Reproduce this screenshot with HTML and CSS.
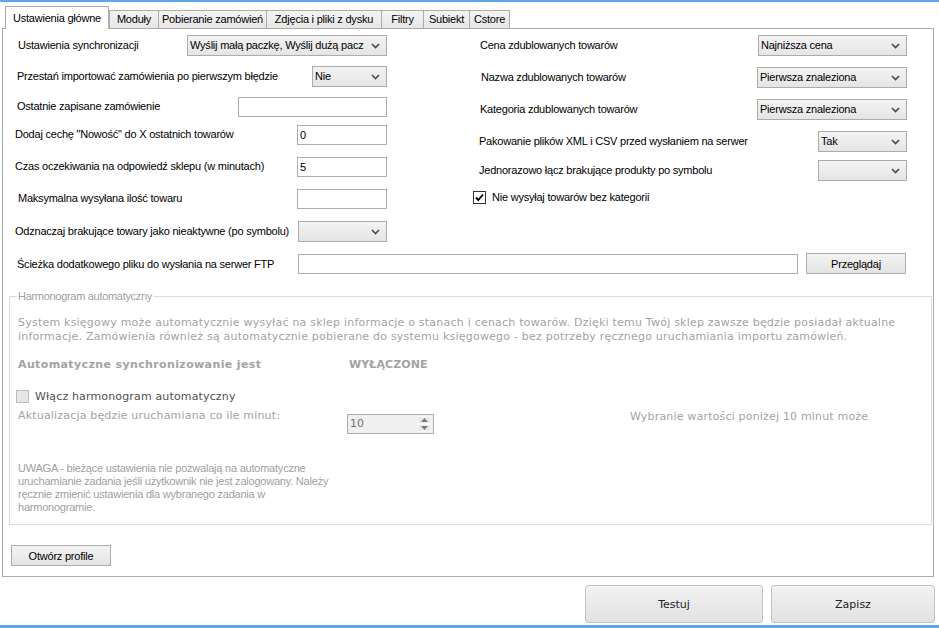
FILE: index.html
```html
<!DOCTYPE html>
<html lang="pl">
<head>
<meta charset="utf-8">
<title>Ustawienia główne</title>
<link rel="stylesheet" href="styles.css">
</head>
<body>
<div class="app">
  <div class="bar-top"></div>
  <div class="tabs">
    <div class="tab tab-active t1">Ustawienia główne</div>
    <div class="tab t2">Moduły</div>
    <div class="tab t3">Pobieranie zamówień</div>
    <div class="tab t4">Zdjęcia i pliki z dysku</div>
    <div class="tab t5">Filtry</div>
    <div class="tab t6">Subiekt</div>
    <div class="tab t7">Cstore</div>
  </div>
  <div class="page">
    <div class="columns">
      <div class="col col-left">
        <div class="row l1">
          <span class="lbl i3">Ustawienia synchronizacji</span>
          <div class="select w200"><span class="sel-text">Wyślij małą paczkę, Wyślij dużą pacz</span><svg class="chev" width="9" height="6" viewBox="0 0 9 6"><polyline points="1,1 4.5,4.5 8,1"/></svg></div>
        </div>
        <div class="row l2">
          <span class="lbl i2">Przestań importować zamówienia po pierwszym błędzie</span>
          <div class="select w75"><span class="sel-text">Nie</span><svg class="chev" width="9" height="6" viewBox="0 0 9 6"><polyline points="1,1 4.5,4.5 8,1"/></svg></div>
        </div>
        <div class="row l3">
          <span class="lbl i2">Ostatnie zapisane zamówienie</span>
          <div class="input w149"></div>
        </div>
        <div class="row l4">
          <span class="lbl">Dodaj cechę "Nowość" do X ostatnich towarów</span>
          <div class="input w90">0</div>
        </div>
        <div class="row l5">
          <span class="lbl">Czas oczekiwania na odpowiedź sklepu (w minutach)</span>
          <div class="input w90">5</div>
        </div>
        <div class="row l6">
          <span class="lbl i3">Maksymalna wysyłana ilość towaru</span>
          <div class="input w90"></div>
        </div>
        <div class="row l7">
          <span class="lbl">Odznaczaj brakujące towary jako nieaktywne (po symbolu)</span>
          <div class="select w89"><span class="sel-text"></span><svg class="chev" width="9" height="6" viewBox="0 0 9 6"><polyline points="1,1 4.5,4.5 8,1"/></svg></div>
        </div>
      </div>
      <div class="col col-right">
        <div class="row r1">
          <span class="lbl i7">Cena zdublowanych towarów</span>
          <div class="select w149"><span class="sel-text">Najniższa cena</span><svg class="chev" width="9" height="6" viewBox="0 0 9 6"><polyline points="1,1 4.5,4.5 8,1"/></svg></div>
        </div>
        <div class="row r2">
          <span class="lbl i8">Nazwa zdublowanych towarów</span>
          <div class="select w150"><span class="sel-text">Pierwsza znaleziona</span><svg class="chev" width="9" height="6" viewBox="0 0 9 6"><polyline points="1,1 4.5,4.5 8,1"/></svg></div>
        </div>
        <div class="row r3">
          <span class="lbl i7">Kategoria zdublowanych towarów</span>
          <div class="select w150"><span class="sel-text">Pierwsza znaleziona</span><svg class="chev" width="9" height="6" viewBox="0 0 9 6"><polyline points="1,1 4.5,4.5 8,1"/></svg></div>
        </div>
        <div class="row r4">
          <span class="lbl i6">Pakowanie plików XML i CSV przed wysłaniem na serwer</span>
          <div class="select w89"><span class="sel-text">Tak</span><svg class="chev" width="9" height="6" viewBox="0 0 9 6"><polyline points="1,1 4.5,4.5 8,1"/></svg></div>
        </div>
        <div class="row r5">
          <span class="lbl i6">Jednorazowo łącz brakujące produkty po symbolu</span>
          <div class="select w89"><span class="sel-text"></span><svg class="chev" width="9" height="6" viewBox="0 0 9 6"><polyline points="1,1 4.5,4.5 8,1"/></svg></div>
        </div>
        <div class="check-row">
          <span class="checkbox checked"><svg width="11" height="11" viewBox="0 0 11 11"><polyline points="2,5.5 4.3,8 9,2.5"/></svg></span>
          <span class="check-label">Nie wysyłaj towarów bez kategorii</span>
        </div>
      </div>
    </div>

    <div class="path-row">
      <span class="path-lbl">Ścieżka dodatkowego pliku do wysłania na serwer FTP</span>
      <div class="input w500"></div>
      <button class="btn btn-browse">Przeglądaj</button>
    </div>

    <fieldset class="group">
      <legend>Harmonogram automatyczny</legend>
      <p class="desc">System księgowy może automatycznie wysyłać na sklep informacje o stanach i cenach towarów. Dzięki temu Twój sklep zawsze będzie posiadał aktualne<br>informacje. Zamówienia również są automatycznie pobierane do systemu księgowego - bez potrzeby ręcznego uruchamiania importu zamówień.</p>
      <div class="status-row">
        <span class="status-lbl">Automatyczne synchronizowanie jest</span>
        <span class="status-val">WYŁĄCZONE</span>
      </div>
      <div class="enable-row">
        <span class="checkbox disabled"></span>
        <span class="enable-lbl">Włącz harmonogram automatyczny</span>
      </div>
      <div class="interval-row">
        <span class="interval-lbl">Aktualizacja będzie uruchamiana co ile minut:</span>
        <div class="spin">
          <span class="spin-val">10</span>
          <div class="spin-btns">
            <span class="spin-btn"><svg width="7" height="4" viewBox="0 0 7 4"><polygon points="3.5,0 7,4 0,4"/></svg></span>
            <span class="spin-btn"><svg width="7" height="4" viewBox="0 0 7 4"><polygon points="0,0 7,0 3.5,4"/></svg></span>
          </div>
        </div>
        <span class="interval-hint">Wybranie wartości poniżej 10 minut może</span>
      </div>
      <p class="note">UWAGA - bieżące ustawienia nie pozwalają na automatyczne<br>uruchamianie zadania jeśli użytkownik nie jest zalogowany. Należy<br>ręcznie zmienić ustawienia dla wybranego zadania w<br>harmonogramie.</p>
    </fieldset>

    <button class="btn btn-profile">Otwórz profile</button>
  </div>

  <div class="footer">
    <button class="fbtn testuj">Testuj</button>
    <button class="fbtn zapisz">Zapisz</button>
  </div>
  <div class="bar-bottom"></div>
</div>
</body>
</html>
```

FILE: styles.css
```css
* { box-sizing: border-box; }
html, body { margin: 0; padding: 0; background: #ffffff; }
body {
  font-family: "Liberation Sans", Arial, sans-serif;
  font-size: 11px;
  letter-spacing: -0.22px;
  color: #000;
}
.app {
  width: 939px;
  height: 628px;
  display: flex;
  flex-direction: column;
  overflow: hidden;
}
.bar-top { flex: none; height: 2px; background: #5ea6e8; }
.bar-bottom { flex: none; height: 3px; margin-top: auto; background: #5ea6e8; }

/* tabs */
.tabs {
  flex: none;
  height: 26px;
  display: flex;
  align-items: flex-end;
  padding-left: 5px;
}
.tab {
  height: 18px;
  margin-left: -1px;
  border: 1px solid #acacac;
  border-bottom: none;
  background: linear-gradient(#f4f4f4, #e6e6e6);
  display: flex;
  align-items: center;
  justify-content: center;
  white-space: nowrap;
  line-height: 13px;
}
.tab-active {
  height: 23px;
  margin-left: 0;
  margin-bottom: -1px;
  background: #fff;
  position: relative;
  z-index: 1;
}
.t1 { width: 104px; }
.t2 { width: 50px; margin-left: 0; }
.t3 { width: 109px; }
.t4 { width: 116px; }
.t5 { width: 43px; }
.t6 { width: 47px; }
.t7 { width: 41px; }

/* tab page */
.page {
  flex: none;
  margin-left: 2px;
  width: 932px;
  height: 549px;
  border: 1px solid #acacac;
  padding-top: 6px;
  display: flex;
  flex-direction: column;
}
.columns { display: flex; margin-left: 12px; }
.col-left { width: 372px; }
.col-right { width: 434px; margin-left: 86px; }
.row {
  height: 21px;
  display: flex;
  align-items: center;
  justify-content: space-between;
}
.lbl { white-space: nowrap; line-height: 13px; }
.i2 { padding-left: 2px; }
.i3 { padding-left: 3px; }
.i6 { padding-left: 6px; }
.i7 { padding-left: 7px; }
.i8 { padding-left: 8px; }

.l2 { margin-top: 10px; }
.l3 { margin-top: 9px; }
.l4 { margin-top: 7px; }
.l5 { margin-top: 11px; }
.l6 { margin-top: 11px; }
.l7 { margin-top: 12px; }
.r2, .r3, .r4 { margin-top: 11px; }
.r5 { margin-top: 8px; }

.select {
  height: 21px;
  border: 1px solid #acacac;
  background: linear-gradient(#f3f3f3, #e5e5e5);
  display: flex;
  align-items: center;
  padding-left: 2px;
  padding-right: 6px;
}
.sel-text { flex: 1; overflow: hidden; white-space: nowrap; line-height: 13px; }
.chev { flex: none; margin-left: 4px; }
.chev polyline { fill: none; stroke: #4a4a4a; stroke-width: 1.6; }

.input {
  height: 20px;
  border: 1px solid #abadb3;
  background: #fff;
  padding-left: 2px;
  line-height: 18px;
}
.w75 { width: 75px; }
.w89 { width: 89px; }
.w90 { width: 90px; }
.w149 { width: 149px; }
.w150 { width: 150px; }
.w200 { width: 200px; }
.w500 { width: 500px; }

.check-row {
  margin-top: 9px;
  display: flex;
  align-items: center;
  height: 14px;
}
.checkbox {
  width: 13px;
  height: 13px;
  flex: none;
  display: flex;
  align-items: center;
  justify-content: center;
}
.checkbox.checked { border: 1px solid #333; background: #fff; }
.checkbox.checked polyline { fill: none; stroke: #000; stroke-width: 1.9; }
.checkbox.disabled { border: 1px solid #bcbcbc; background: #e6e6e6; }
.check-label { margin-left: 6px; white-space: nowrap; }

/* path row */
.path-row {
  margin: 11px 0 0 12px;
  display: flex;
  align-items: center;
  height: 21px;
}
.path-lbl { width: 283px; padding-left: 2px; white-space: nowrap; }
.btn {
  font-family: "Liberation Sans", Arial, sans-serif;
  font-size: 11px;
  letter-spacing: -0.22px;
  color: #000;
  height: 21px;
  border: 1px solid #acacac;
  background: linear-gradient(#f3f3f3, #e4e4e4);
  padding: 0;
  border-radius: 0;
}
.btn-browse { width: 100px; margin-left: 8px; }

/* group box */
.group {
  margin: 16px 1px 0 6px;
  padding: 0 0 10px 8px;
  border: 1px solid #dcdcdc;
  min-width: 0;
}
.group legend {
  padding: 0 1px;
  margin-left: -1px;
  color: #a0a0a0;
  line-height: 13px;
  letter-spacing: -0.3px;
}
.desc {
  margin: 13px 0 0;
  font-family: "DejaVu Sans", Verdana, sans-serif;
  font-size: 11px;
  letter-spacing: 0.22px;
  line-height: 14px;
  color: #a3a3a3;
  white-space: nowrap;
}
.status-row {
  margin-top: 14px;
  display: flex;
  font-family: "DejaVu Sans", Verdana, sans-serif;
  font-weight: bold;
  font-size: 11px;
  letter-spacing: 0.38px;
  line-height: 14px;
  color: #a3a3a3;
}
.status-lbl { width: 331px; white-space: nowrap; }
.status-val { letter-spacing: 0.1px; }
.enable-row {
  margin: 17px 0 0 -2px;
  display: flex;
  align-items: center;
  height: 14px;
}
.enable-lbl {
  margin-left: 6px;
  font-family: "DejaVu Sans", Verdana, sans-serif;
  font-size: 11px;
  letter-spacing: 0.15px;
  color: #505050;
  white-space: nowrap;
}
.interval-row {
  margin-top: 6px;
  display: flex;
  align-items: flex-start;
  font-family: "DejaVu Sans", Verdana, sans-serif;
  font-size: 11px;
  letter-spacing: 0.18px;
  line-height: 14px;
  color: #a3a3a3;
}
.interval-lbl { width: 329px; white-space: nowrap; }
.spin {
  margin-top: 5px;
  width: 87px;
  height: 20px;
  border: 1px solid #acacac;
  background: #f0f0f0;
  display: flex;
  align-items: center;
  padding-left: 2px;
  letter-spacing: 0;
}
.spin-val { flex: 1; color: #707070; }
.spin-btns {
  width: 14px;
  height: 16px;
  margin-right: 2px;
  display: flex;
  flex-direction: column;
}
.spin-btn {
  flex: 1;
  display: flex;
  align-items: center;
  justify-content: center;
  background: #e9e9e9;
  border: 1px solid #f6f6f6;
}
.spin-btn polygon { fill: #7a7a7a; }
.interval-hint { margin: 1px 0 0 196px; white-space: nowrap; }
.note {
  margin: 28px 0 0;
  color: #a0a0a0;
  line-height: 13px;
}

.btn-profile { width: 100px; margin: 20px 0 0 8px; }

/* footer */
.footer {
  flex: none;
  margin-top: 8px;
  display: flex;
  justify-content: flex-end;
  padding-right: 4px;
}
.fbtn {
  height: 38px;
  border: 1px solid #c3c3c3;
  border-radius: 3px;
  background: linear-gradient(#f2f2f2, #e2e2e2);
  font-family: "DejaVu Sans", Verdana, sans-serif;
  font-size: 11px;
  color: #222;
  padding: 0;
}
.testuj { width: 178px; }
.zapisz { width: 164px; margin-left: 8px; }
```
